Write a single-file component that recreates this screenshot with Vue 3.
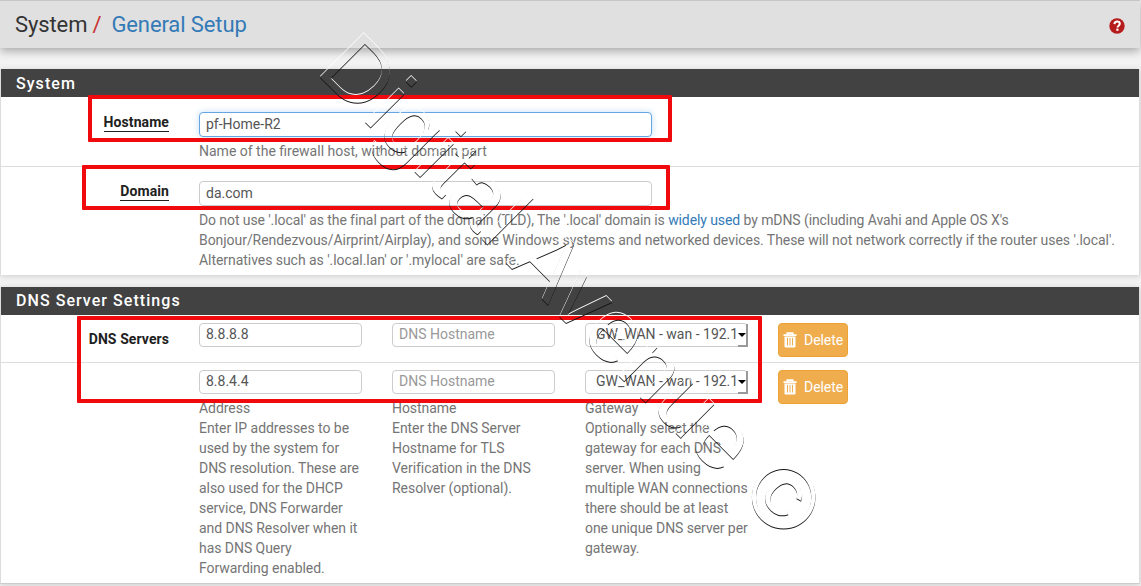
<script setup>
const generalRows = [
  { id: 'hostname', label: 'Hostname', value: 'pf-Home-R2', focused: true },
  { id: 'domain', label: 'Domain', value: 'da.com', focused: false },
]
const servers = [
  { address: '8.8.8.8', gateway: 'GW_WAN - wan - 192.1' },
  { address: '8.8.4.4', gateway: 'GW_WAN - wan - 192.1' },
]
</script>

<template>
  <div class="page">
    <header class="header">
      <h1 class="crumbs">
        <span>System</span><span class="slash">/</span><a>General Setup</a>
      </h1>
      <svg class="help" viewBox="0 0 16 16">
        <circle cx="8" cy="8" r="7.7" />
        <path d="M5.4 6.1C5.5 4.3 6.6 3.5 8.1 3.5c1.6 0 2.7.9 2.7 2.3 0 1.8-2.3 1.9-2.3 3.6" />
        <rect x="7.3" y="10.6" width="2.2" height="2.2" />
      </svg>
    </header>

    <section class="panel">
      <h2 class="heading first">System</h2>
      <div v-for="row in generalRows" :key="row.id" class="row" :class="row.id">
        <div class="label"><span class="required">{{ row.label }}</span></div>
        <div class="field">
          <div class="input" :class="{ focused: row.focused }">{{ row.value }}</div>
          <p v-if="row.id === 'hostname'" class="hint">Name of the firewall host, without domain part</p>
          <p v-else class="hint">
            <span class="tight">Do not use '.local' as the final part of the domain (TLD), The '.local' domain is <a>widely used</a> by mDNS (including Avahi and Apple OS X's</span><br>
            <span class="snug">Bonjour/Rendezvous/Airprint/Airplay), and some Windows systems and networked devices. These will not network correctly if the router uses '.local'.</span><br>
            <span class="snug">Alternatives such as '.local.lan' or '.mylocal' are safe.</span>
          </p>
        </div>
      </div>
    </section>

    <section class="panel dns">
      <h2 class="heading">DNS Server Settings</h2>
      <div v-for="(server, i) in servers" :key="i" class="row server" :class="{ last: i === 1 }">
        <div class="label"><span v-if="i === 0">DNS Servers</span></div>
        <div class="cell">
          <div class="input">{{ server.address }}</div>
          <p v-if="i === 1" class="hint snug">Address<br>Enter IP addresses to be<br>used by the system for<br>DNS resolution. These are<br>also used for the DHCP<br>service, DNS Forwarder<br>and DNS Resolver when it<br>has DNS Query<br>Forwarding enabled.</p>
        </div>
        <div class="cell">
          <div class="input placeholder">DNS Hostname</div>
          <p v-if="i === 1" class="hint snug">Hostname<br>Enter the DNS Server<br>Hostname for TLS<br>Verification in the DNS<br>Resolver (optional).</p>
        </div>
        <div class="cell">
          <div class="input select">
            <span>{{ server.gateway }}</span>
            <i class="arrow"></i>
          </div>
          <p v-if="i === 1" class="hint tight">Gateway<br>Optionally select the<br>gateway for each DNS<br>server. When using<br>multiple WAN connections<br>there should be at least<br>one unique DNS server per<br>gateway.</p>
        </div>
        <button class="delete">
          <svg class="trash" viewBox="0 0 14 16">
            <path class="lid" d="M.5 3.2h13M4.3 3V1.2h5.4V3" />
            <path class="can" d="M1.5 4.4h11v9.8q0 1.3-1.3 1.3H2.8q-1.3 0-1.3-1.3z" />
            <path class="slots" d="M4.5 6v7.5M7 6v7.5M9.5 6v7.5" />
          </svg>
          <span>Delete</span>
        </button>
      </div>
    </section>

    <div class="mark mark-hostname"></div>
    <div class="mark mark-domain"></div>
    <div class="mark mark-dns"></div>

    <svg class="watermark" viewBox="0 0 1141 586">
      <defs>
        <filter id="emboss" filterUnits="userSpaceOnUse" x="0" y="0" width="1141" height="586" color-interpolation-filters="sRGB">
          <feOffset in="SourceAlpha" dx="0" dy="1" result="low" />
          <feComposite in="low" in2="SourceAlpha" operator="out" result="darkEdge" />
          <feFlood flood-color="#111" />
          <feComposite in2="darkEdge" operator="in" result="dark" />
          <feOffset in="SourceAlpha" dx="0" dy="-1" result="high" />
          <feComposite in="high" in2="SourceAlpha" operator="out" result="lightEdge" />
          <feFlood flood-color="#fff" />
          <feComposite in2="lightEdge" operator="in" result="light" />
          <feMerge>
            <feMergeNode in="light" />
            <feMergeNode in="dark" />
          </feMerge>
        </filter>
      </defs>
      <g filter="url(#emboss)">
        <text transform="translate(314.8 71.8) rotate(45)">Digital Avenue ©</text>
      </g>
    </svg>
  </div>
</template>

<style>
body {
  background: #fff;
}
</style>

<style scoped>
.page {
  position: relative;
  box-sizing: border-box;
  width: 1141px;
  height: 586px;
  overflow: hidden;
  padding-right: 1px;
  background: #f3f3f3;
  font: 14px/20px Roboto, sans-serif;
  color: #757575;
}
a {
  color: #337ab7;
}
.header {
  box-sizing: border-box;
  display: flex;
  align-items: center;
  justify-content: space-between;
  height: 48px;
  padding: 0 15px 0 15px;
  border-top: 1px solid #c6c6c6;
  background: #e0e0e0;
  box-shadow: 0 3px 9px rgba(0, 0, 0, 0.32);
}
.crumbs {
  display: flex;
  margin: 0;
  font-size: 22px;
  line-height: 26px;
  font-weight: 400;
  letter-spacing: -0.1px;
  color: #333;
}
.slash {
  margin: 0 10px 0 5px;
  color: #c9302c;
}
.help {
  width: 16px;
  height: 16px;
  margin-top: 3px;
}
.help circle {
  fill: #b71c1c;
}
.help path {
  fill: none;
  stroke: #fff;
  stroke-width: 2;
}
.help rect {
  fill: #fff;
}
.panel {
  box-sizing: border-box;
  margin: 21px 0 0;
  border: solid #ddd;
  border-width: 0 1px;
  background: #fff;
  box-shadow: 0 1px 6px rgba(0, 0, 0, 0.16);
}
.panel.dns {
  margin-top: 12px;
  border-bottom: 1px solid #ccc;
}
.heading {
  box-sizing: border-box;
  height: 28px;
  margin: 0;
  padding-left: 15px;
  background: #424242;
  color: #fff;
  font-size: 16px;
  line-height: 28px;
  font-weight: 500;
  letter-spacing: 1.05px;
}
.heading.first {
  padding-top: 1px;
}
.row {
  box-sizing: border-box;
  display: flex;
}
.hostname {
  height: 70px;
  padding-top: 15px;
  border-bottom: 1px solid #ddd;
}
.domain {
  height: 108px;
  padding-top: 14px;
}
.label {
  flex: none;
  width: 168px;
  margin-right: 30px;
  text-align: right;
  font-weight: 700;
  letter-spacing: 0.08px;
  color: #212121;
}
.required {
  display: inline-block;
  line-height: 17px;
  border-bottom: 1px solid #212121;
}
.input {
  box-sizing: border-box;
  width: 453px;
  height: 25px;
  padding: 0 6px;
  border: 1px solid #ccc;
  border-radius: 4px;
  background: #fff;
  line-height: 23px;
  color: #555;
  white-space: nowrap;
}
.input.focused {
  border-color: #66a5e0;
  box-shadow: 0 0 6px rgba(102, 175, 233, 0.4);
}
.hint {
  margin: 4px 0 0;
  white-space: nowrap;
}
.tight {
  letter-spacing: -0.09px;
}
.snug {
  letter-spacing: -0.05px;
}
.server {
  height: 47px;
  padding-top: 8px;
  border-bottom: 1px solid #ddd;
}
.server:not(.last) {
  height: 48px;
}
.server.last {
  height: 220px;
  padding-top: 7px;
  border-bottom: 0;
}
.server .label {
  padding-top: 6px;
}
.cell {
  flex: none;
  width: 163px;
  margin-right: 30px;
}
.cell .input {
  width: 163px;
  height: 24px;
  line-height: 20px;
}
.placeholder {
  color: #999;
}
.select {
  display: flex;
  justify-content: space-between;
  padding: 0 0 0 10px;
}
.arrow {
  box-sizing: border-box;
  flex: none;
  width: 10px;
  height: 23px;
  border: solid #999;
  border-width: 0 2px 2px 0;
}
.arrow::before {
  content: '';
  display: block;
  margin-top: 9px;
  border: 4px solid transparent;
  border-top-color: #000;
  border-bottom: 0;
}
.delete {
  box-sizing: border-box;
  flex: none;
  display: flex;
  align-items: center;
  width: 70px;
  height: 34px;
  padding: 0 0 1px 4px;
  border: 1px solid #eea236;
  border-radius: 4px;
  background: #f0ad4e;
  color: #fff;
  font: 14px/20px Roboto, sans-serif;
  letter-spacing: -0.05px;
  gap: 7px;
}
.trash {
  flex: none;
  width: 14px;
  height: 16px;
  margin-top: 1px;
}
.lid {
  fill: none;
  stroke: #fff;
  stroke-width: 1.8;
}
.can {
  fill: #fff;
}
.slots {
  stroke: #f0ad4e;
  stroke-width: 1;
}
.mark {
  position: absolute;
  box-sizing: border-box;
  border: 4px solid #f00a0e;
  border-radius: 1px;
}
.mark-hostname {
  left: 88px;
  top: 95px;
  width: 584px;
  height: 47px;
}
.mark-domain {
  left: 82px;
  top: 165px;
  width: 588px;
  height: 45px;
}
.mark-dns {
  left: 77px;
  top: 316px;
  width: 685px;
  height: 87px;
}
.watermark {
  position: absolute;
  left: 0;
  top: 0;
  width: 1141px;
  height: 586px;
  pointer-events: none;
}
.watermark text {
  font: 90px 'Liberation Sans', Arial, sans-serif;
}
</style>
